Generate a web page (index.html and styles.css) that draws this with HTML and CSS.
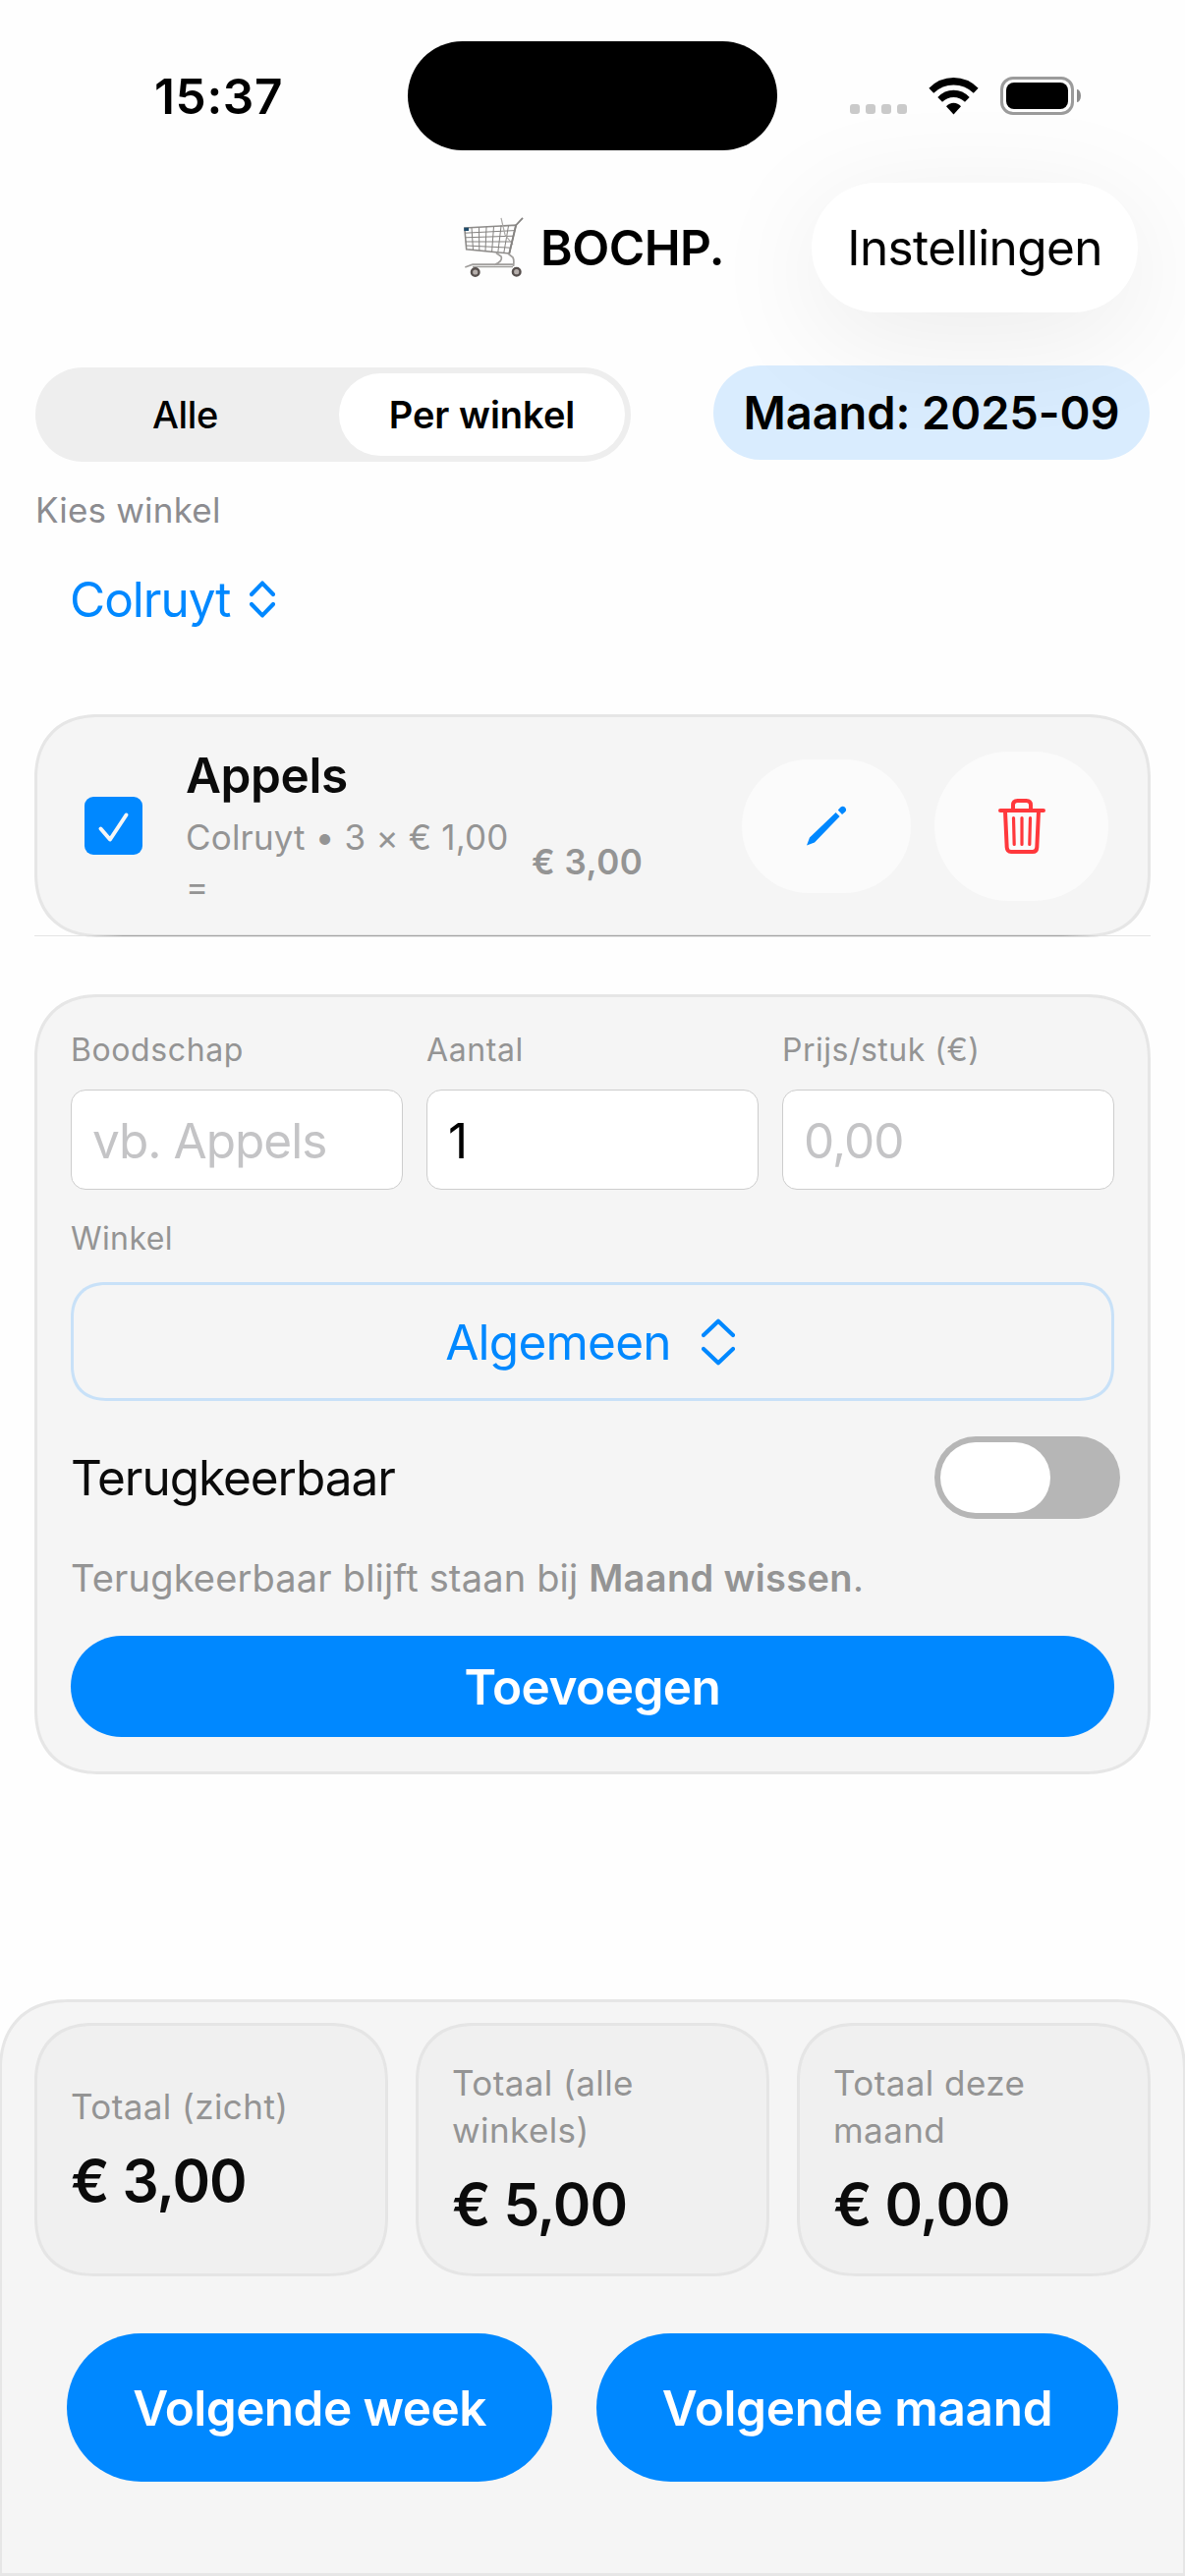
FILE: index.html
```
<!DOCTYPE html>
<html lang="nl">
<head>
<meta charset="utf-8">
<title>BOCHP.</title>
<link rel="stylesheet" href="styles.css">
</head>
<body>
<div class="screen">
  <div class="status">
    <div class="time">15:37</div>
    <div class="island"></div>
    <div class="indicators">
      <div class="signal"><i></i><i></i><i></i><i></i></div>
      <svg class="wifi" width="51" height="38" viewBox="0 0 51 38"><path d="M0.4 10.7Q11 0 25.5 0T50.6 10.7L45.8 15.7Q37 7.5 25.5 7.5T5.2 15.7Z"/><path d="M9.3 20Q16 12.7 25.5 12.7T41.7 20L37 24.7Q32 20 25.5 20T14 24.7Z"/><path d="M18 29.3Q21 25.8 25.5 25.8T33 29.3L25.5 37.4Z"/></svg>
      <div class="battery"><div class="level"></div></div>
      <div class="nub"></div>
    </div>
  </div>

  <header class="nav">
    <div class="title">
      <svg class="cart" width="61" height="62" viewBox="0 0 61 62" fill="none">
        <path d="M.8 11 53 8.2 46.3 37 2.7 32.7Z" stroke="#8e8c8a" stroke-width="1.6"/>
        <path d="M1 16.2 51.8 13.6M1.4 20.8 50.6 19.2M1.8 25 49.4 25M2.3 29 48 31.2M8 10.8 9.5 33.4M15.5 10.4 15.8 34M23 10 22 34.6M30.5 9.6 28.6 35.2M38 9.2 34.8 35.9M45.5 8.8 40.8 36.4" stroke="#858381" stroke-width="1"/>
        <path d="M38 .8 42 18 50 28" stroke="#aaa8a6" stroke-width="1.2"/>
        <path d="M46.3 37 53.2 8.2 60 .8" stroke="#858381" stroke-width="1.8"/>
        <path d="M33 36.5 38 40Q40 45 31 48.5M45 37 50 41Q51.5 44 50.5 50M1.3 51 9 48.2H51.5M9 50.5H50" stroke="#a09e9c" stroke-width="1.7"/>
        <path d="M.3 10.7H5V14H.3Z" fill="#1f4b6b"/>
        <circle cx="11.7" cy="56" r="3.8" fill="#b5aeab" stroke="#564f4d" stroke-width="2.4"/>
        <circle cx="53.7" cy="55.7" r="3.8" fill="#b5aeab" stroke="#564f4d" stroke-width="2.4"/>
      </svg>
      <span>BOCHP.</span>
    </div>
    <div class="settings">Instellingen</div>
  </header>

  <div class="filters">
    <div class="segmented"><div class="seg">Alle</div><div class="seg seg-on">Per winkel</div></div>
    <div class="month">Maand: 2025-09</div>
  </div>

  <div class="caption store-caption">Kies winkel</div>
  <div class="store">
    <span>Colruyt</span>
    <svg width="26" height="38" viewBox="0 0 26 38"><path class="chevron" d="M2 14 13 2.6 24 14M2 24 13 35.4 24 24"/></svg>
  </div>

  <section class="card item">
    <div class="check"><svg width="59" height="59" viewBox="0 0 59 59"><path d="M16.5 32.5 26 43.5 42.5 18.5"/></svg></div>
    <div class="info">
      <div class="name">Appels</div>
      <div class="detail"><div class="calc">Colruyt • 3 × € 1,00 =</div><div class="sum">€ 3,00</div></div>
    </div>
    <div class="action edit"><svg width="41" height="41" viewBox="0 0 41 41"><path d="M0 40.4 3 32.600 29.600 6.900 33.600 11 8 37.400ZM31.800 4.600 34.300 1.800Q36.800-.4 39 1.800 41.200 4.200 39 6.600L36 9Z"/></svg></div>
    <div class="action delete"><svg width="48" height="56" viewBox="0 0 48 56"><path d="M2 12H46M15 12V6.5Q15 2 19.500 2H28.500Q33 2 33 6.500V12M7 13 8.700 49.500Q9 54 13 54H35Q39 54 39.300 49.500L41 13"/><path class="thin" d="M15.500 19.500 16.200 46.500M24 19.500V46.500M32.500 19.500 31.800 46.500"/></svg></div>
  </section>

  <section class="card form">
    <div class="fields">
      <div class="field"><div class="label">Boodschap</div><div class="input hint">vb. Appels</div></div>
      <div class="field"><div class="label">Aantal</div><div class="input">1</div></div>
      <div class="field"><div class="label price">Prijs/stuk (€)</div><div class="input hint">0,00</div></div>
    </div>
    <div class="label shop-label">Winkel</div>
    <div class="select">
      <span>Algemeen</span>
      <svg width="34" height="48" viewBox="0 0 34 48"><path class="chevron" d="M2 17 17 2.800 32 17M2 31 17 45.200 32 31"/></svg>
    </div>
    <div class="recurring"><span>Terugkeerbaar</span><div class="toggle"><div class="thumb"></div></div></div>
    <div class="help">Terugkeerbaar blijft staan bij <b>Maand wissen</b>.</div>
    <div class="button add">Toevoegen</div>
  </section>

  <footer class="footer">
    <div class="stats">
      <div class="stat"><div class="caption">Totaal (zicht)</div><div class="value">€ 3,00</div></div>
      <div class="stat"><div class="caption">Totaal (alle winkels)</div><div class="value">€ 5,00</div></div>
      <div class="stat"><div class="caption">Totaal deze maand</div><div class="value">€ 0,00</div></div>
    </div>
    <div class="next">
      <div class="button week">Volgende week</div>
      <div class="button maand">Volgende maand</div>
    </div>
  </footer>
</div>
</body>
</html>
```
FILE: styles.css
```
* { box-sizing: border-box; }

body {
  margin: 0;
  background: #fefefe;
  color: #000;
  font-family: Inter, "Noto Sans", sans-serif;
  font-size: 49.5px;
}

svg { display: block; flex: none; }

.screen {
  width: 1206px;
  height: 2622px;
  overflow: hidden;
  display: flex;
  flex-direction: column;
}

/* Status bar */
.status {
  height: 153px;
  padding-top: 42px;
  display: flex;
  align-items: flex-start;
}
.time {
  width: 415px;
  padding-left: 157px;
  line-height: 112px;
  font-weight: 600;
  letter-spacing: .67px;
}
.island {
  width: 376px;
  height: 111px;
  border-radius: 56px;
  background: #000;
}
.indicators {
  height: 111px;
  margin-left: 74px;
  display: flex;
  align-items: center;
}
.signal { display: flex; gap: 6px; padding-top: 27px; margin-right: 22px; }
.signal i { width: 10px; height: 10px; border-radius: 3px; background: #cacaca; }
.wifi { margin-right: 22px; }
.battery {
  width: 75px;
  height: 39px;
  padding: 3px;
  border: 3px solid #9b9b9b;
  border-radius: 13px;
}
.level { height: 27px; border-radius: 8px; background: #000; }
.nub {
  width: 4px;
  height: 13px;
  margin-left: 3px;
  border-radius: 0 4px 4px 0 / 0 7px 7px 0;
  background: #8c8c8c;
}

/* Navigation bar */
.nav {
  position: relative;
  z-index: 1;
  height: 132px;
  margin-top: 33px;
  padding-right: 48px;
  display: grid;
  grid-template-columns: 472px 1fr auto;
}
.title {
  grid-column: 2;
  display: flex;
  align-items: center;
  gap: 17px;
  font-weight: 600;
  letter-spacing: -.5px;
}
.settings {
  width: 332px;
  line-height: 132px;
  border-radius: 66px;
  background: #fff;
  text-align: center;
  letter-spacing: -.61px;
  box-shadow: 0 24px 120px rgba(0, 0, 0, .08);
}

/* Filter row */
.filters {
  margin: 54px 36px 0;
  height: 98px;
  display: flex;
  justify-content: space-between;
}
.segmented {
  width: 606px;
  height: 96px;
  margin-top: 2px;
  padding: 6px;
  display: flex;
  border-radius: 48px;
  background: #eee;
}
.seg {
  flex: 1;
  padding-right: 10px;
  line-height: 84px;
  text-align: center;
  font-size: 38px;
  font-weight: 500;
  letter-spacing: -.3px;
}
.seg-on {
  flex: 0 0 291px;
  padding-right: 0;
  border-radius: 42px;
  background: #fff;
  font-weight: 600;
  letter-spacing: 0;
}
.month {
  width: 444px;
  height: 96px;
  line-height: 96px;
  border-radius: 48px;
  background: #d9ecfe;
  text-align: center;
  font-size: 47px;
  font-weight: 600;
  letter-spacing: -.1px;
}

.caption {
  font-size: 35px;
  line-height: 48px;
  letter-spacing: .42px;
  color: #8c8c90;
}
.store-caption { margin: 25px 36px 0; letter-spacing: .2px; }

.store {
  margin: 48px 0 0 71px;
  display: flex;
  align-items: center;
  gap: 20px;
  height: 38px;
  color: #0088ff;
  letter-spacing: -1px;
}
.chevron {
  fill: none;
  stroke: #0088ff;
  stroke-width: 4.2;
  stroke-linecap: round;
  stroke-linejoin: round;
}

/* Cards */
.card {
  width: 1136px;
  margin-left: 35px;
  border: 3px solid #e6e6e6;
  border-radius: 66px;
  corner-shape: superellipse(1.2);
  background: #f5f5f5;
  color: #0b0b0b;
}

/* Shopping item */
.item {
  position: relative;
  height: 227px;
  margin-top: 98px;
  padding: 0 39px 0 48px;
  display: flex;
  align-items: center;
}
.item::after {
  content: "";
  position: absolute;
  left: -3px;
  right: -3px;
  bottom: -2px;
  height: 1px;
  background: linear-gradient(90deg, #e4e4e4 50px, #a4a4a4 90px, #a4a4a4 calc(100% - 90px), #e4e4e4 calc(100% - 50px));
}
.check { width: 59px; height: 59px; border-radius: 9px; background: #0088ff; }
.check path {
  fill: none;
  stroke: #f6f6f6;
  stroke-width: 4;
  stroke-linecap: round;
  stroke-linejoin: round;
}
.info { width: 566px; margin: 4px 0 0 44px; }
.name { line-height: 62px; font-weight: 600; letter-spacing: -.4px; }
.detail {
  margin-top: 7px;
  display: flex;
  align-items: center;
  gap: 21px;
  font-size: 35px;
  line-height: 50px;
  color: #949494;
}
.calc { width: 331px; letter-spacing: .17px; }
.sum { font-weight: 600; letter-spacing: .5px; }
.action {
  display: flex;
  align-items: center;
  justify-content: center;
  background: #fbfbfb;
}
.edit { width: 172px; height: 136px; border-radius: 68px; }
.edit path { fill: #0088ff; }
.delete { width: 177px; height: 152px; margin-left: 24px; border-radius: 76px; }
.delete path {
  fill: none;
  stroke: #ff383c;
  stroke-width: 4;
  stroke-linecap: round;
  stroke-linejoin: round;
}
.delete .thin { stroke-width: 3.2; }

/* Entry form */
.form { height: 794px; margin-top: 58px; padding: 29px 34px 0; }
.fields {
  display: grid;
  grid-template-columns: repeat(3, 1fr);
  gap: 24px;
}
.label {
  font-size: 32px;
  line-height: 50px;
  letter-spacing: .6px;
  color: #949494;
}
.price { letter-spacing: .5px; }
.input {
  height: 102px;
  margin-top: 15px;
  padding-left: 21px;
  line-height: 103px;
  border: 1px solid #cdcdcd;
  border-radius: 15px;
  background: #fff;
  color: #000;
}
.hint { color: #c4c4c6; letter-spacing: -1px; }
.shop-label { margin-top: 25px; letter-spacing: .4px; }
.select {
  height: 121px;
  margin-top: 19px;
  padding-right: 5px;
  display: flex;
  align-items: center;
  justify-content: center;
  gap: 31px;
  border: 3px solid #c8e1f8;
  border-radius: 36px;
  corner-shape: superellipse(1.2);
  color: #0088ff;
  letter-spacing: -.77px;
}
.recurring {
  height: 84px;
  margin: 36px -6px 0 0;
  display: flex;
  align-items: center;
  justify-content: space-between;
  letter-spacing: -1.05px;
}
.toggle {
  width: 189px;
  height: 84px;
  padding: 6px;
  border-radius: 42px;
  background: #b6b6b6;
}
.thumb { width: 112px; height: 72px; border-radius: 36px; background: #fff; }
.help {
  margin-top: 36px;
  font-size: 38px;
  line-height: 48px;
  letter-spacing: .17px;
  color: #949494;
}
.help b { font-weight: 600; letter-spacing: .35px; }

.button {
  background: #0088ff;
  color: #fff;
  text-align: center;
  font-weight: 600;
}
.add {
  height: 103px;
  margin-top: 35px;
  line-height: 104px;
  border-radius: 52px;
  letter-spacing: -.51px;
}

/* Totals panel */
.footer {
  width: 1208px;
  height: 587px;
  margin: 229px 0 0 -1px;
  padding: 21px 33px 0;
  border: 3px solid #e6e6e6;
  border-radius: 72px 72px 0 0;
  corner-shape: superellipse(1.2);
  background: #f5f5f5;
}
.stats {
  display: grid;
  grid-template-columns: repeat(3, 360px);
  gap: 28px;
}
.stat {
  height: 258px;
  padding: 0 33px 1px 34px;
  display: flex;
  flex-direction: column;
  justify-content: center;
  gap: 16px;
  border: 3px solid #e5e5e5;
  border-radius: 60px;
  corner-shape: superellipse(1.2);
  background: #f0f0f0;
  color: #0b0b0b;
}
.stat .caption { color: #949494; }
.value {
  font-size: 58.5px;
  line-height: 72px;
  font-weight: 600;
  letter-spacing: -1px;
}
.next {
  margin: 58px 0 0 33px;
  display: flex;
  gap: 45px;
}
.next .button { height: 151px; line-height: 152px; border-radius: 76px; }
.week { width: 494px; letter-spacing: -.56px; }
.maand { width: 531px; letter-spacing: -.33px; }
```
